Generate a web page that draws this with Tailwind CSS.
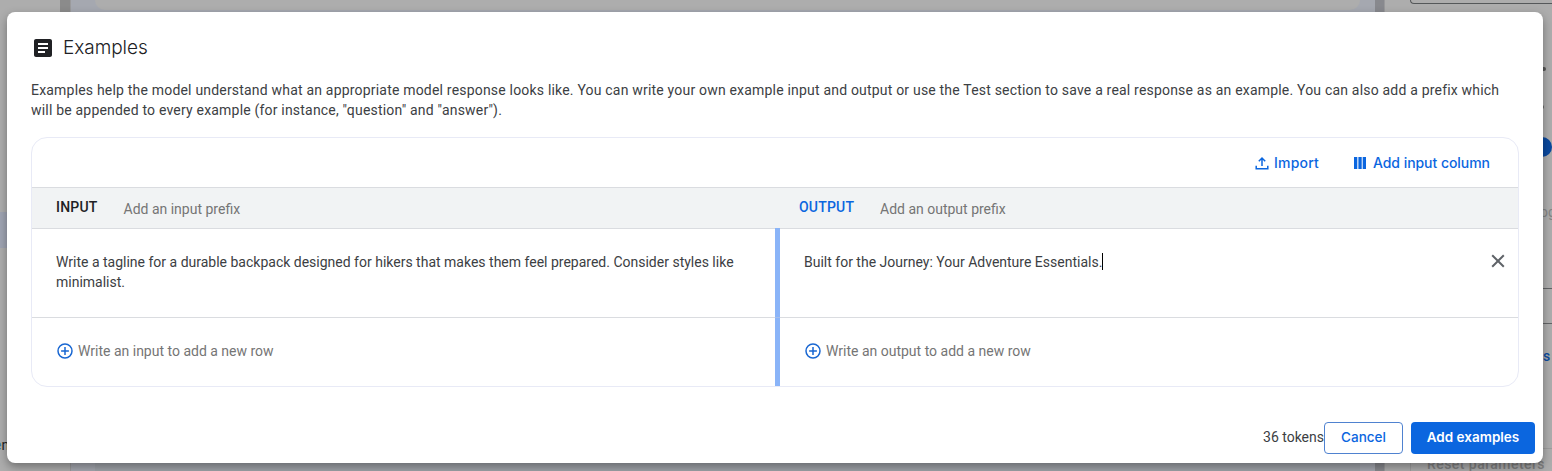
<!DOCTYPE html>
<html lang="en">
<head>
<meta charset="utf-8">
<title>Examples</title>
<script src="https://cdn.jsdelivr.net/npm/@tailwindcss/browser@4"></script>
</head>
<body class="relative h-[471px] w-[1552px] overflow-hidden bg-[#adadad] font-[Roboto,sans-serif] text-sm text-[#3c4043]">
  <!-- Dimmed page behind the dialog -->
  <div class="flex h-full" aria-hidden="true">
    <div class="flex w-[60px] flex-col justify-start bg-[#adadad] pt-[212px]">
      <div class="h-9 bg-[#9fa4b2]"></div>
      <div class="mt-[187px] h-5 w-[9px] whitespace-nowrap text-[#222]"><span class="-ml-[6px] text-[#39779c]">e</span>n</div>
    </div>
    <div class="flex w-[11px] flex-col border-r border-[#9a9a9c] bg-[#8b8b8b]"><div class="mt-auto h-[30px] bg-[#adadad]"></div></div>
    <div class="flex w-[1304px] flex-col justify-between bg-[#a5a8b0] pr-[15px] pl-[24px]">
      <div class="h-[10px] rounded-b-[20px] bg-[#adadad]"></div>
      <div class="h-5 bg-[#9fa3a9]"></div>
    </div>
    <div class="w-[10px] border-r border-[#99999b] bg-[#88898e]"></div>
    <div class="flex flex-1 flex-col overflow-hidden pl-[25px]">
      <div class="h-1 shrink-0 rounded-bl border-b border-l border-[#55585a]"></div>
      <div class="mt-[63px] ml-[131px] h-1 w-[5px] shrink-0 rounded-full bg-[#555]"></div>
      <div class="mt-[34px] ml-[130px] h-1 w-1 shrink-0 rounded-full bg-[#666]"></div>
      <div class="mt-7 ml-[122px] size-5 shrink-0 rounded-full bg-[#0a489e]"></div>
      <div class="mt-[45px] ml-[130px] h-5 shrink-0 leading-5 whitespace-nowrap text-[#858585]">og</div>
      <div class="mt-[66px] h-9 shrink-0 border-y border-[#626466]"></div>
      <div class="mt-[22px] ml-[133px] h-5 shrink-0 font-medium text-[#0c4b9f]">s</div>
      <div class="mt-[82px] h-[30px] shrink-0 border-t border-l border-[#9d9d9d] pt-[5px] pl-4 leading-5 font-medium tracking-[.45px] whitespace-nowrap text-[#808080]">Reset parameters</div>
    </div>
  </div>

  <!-- Dialog -->
  <section class="absolute top-3 left-[7px] flex h-[451px] w-[1536px] flex-col rounded-lg bg-white shadow-[0_4px_10px_rgba(0,0,0,.35)]" role="dialog">
    <h1 class="flex h-[68px] items-center gap-2 pt-1 pl-6 font-[Inter,sans-serif] text-[19px] font-light tracking-[-.05px] text-[#202124]">
      <svg class="size-6" viewBox="0 0 24 24" fill="#202124"><path d="M19 3H5c-1.100 0-2 .9-2 2v14c0 1.100.9 2 2 2h14c1.100 0 2-.9 2-2V5c0-1.100-.9-2-2-2zm-5 14H7v-2h7v2zm3-4H7v-2h10v2zm0-4H7V7h10v2z"/></svg>
      <span>Examples</span>
    </h1>
    <p class="px-6 leading-5 tracking-[.195px]">Examples help the model understand what an appropriate model response looks like. You can write your own example input and output or use the Test section to save a real response as an example. You can also add a prefix which<br>will be appended to every example (for instance, "question" and "answer").</p>

    <div class="mx-6 mt-[17px] flex h-[250px] flex-col overflow-hidden rounded-2xl border border-[#e8eaf6]">
      <div class="flex h-[49px] items-center justify-end gap-[34px] pr-7 font-[Inter,sans-serif] text-sm font-medium text-[#0b66df]">
        <button class="flex items-center gap-1">
          <svg class="size-4" viewBox="0 0 16 16" fill="none" stroke="#0b66df" stroke-width="1.500"><path d="M8 11V3.200M4.800 6.200 8 3l3.200 3.200M2.200 10.800v2.900h11.600v-2.900"/></svg><span class="w-[46px] text-left tracking-[.2px]">Import</span>
        </button>
        <button class="flex items-center gap-[7px]">
          <svg class="h-3 w-3" viewBox="0 0 12 12" fill="#0b66df"><path d="M0 0h3.300v12H0zM4.400 0h3.300v12H4.400zM8.700 0H12v12H8.700z"/></svg><span class="w-[117px] text-left tracking-[-.05px] whitespace-nowrap">Add input column</span>
        </button>
      </div>
      <div class="flex h-[42px] shrink-0 border-y border-[#dadce0] bg-[#f1f3f4]">
        <div class="flex w-[743px] pl-6 leading-5"><span class="w-[67.500px] pt-[9px] font-medium tracking-[.2px] text-[#202124]">INPUT</span><span class="pt-[11px] text-[#757575]">Add an input prefix</span></div>
        <div class="flex flex-1 pl-6 leading-5"><span class="w-[81px] pt-[9px] font-medium tracking-[.2px] text-[#0b66df]">OUTPUT</span><span class="pt-[11px] text-[#757575]">Add an output prefix</span></div>
      </div>
      <div class="-mt-px flex h-[90px] shrink-0">
        <div class="w-[743px] border-b border-[#dadce0] pt-6 pl-6 leading-5">Write a tagline for a durable backpack designed for hikers that makes them feel prepared. Consider styles like<br>minimalist.</div>
        <div class="w-[5px] border-b border-[#a5bfed] bg-[#8ab4f8]"></div>
        <div class="flex flex-1 items-start border-b border-[#dadce0] pt-6 pl-6 leading-5">
          <span>Built for the Journey: Your Adventure Essentials.</span><span class="mt-px h-[17px] w-px bg-black"></span>
          <svg class="mt-[2px] mr-[13px] ml-auto size-3.5" viewBox="0 0 14 14" stroke="#5f6368" stroke-width="2"><path d="M1.200 1.200l11.600 11.600M12.800 1.200L1.200 12.800"/></svg>
        </div>
      </div>
      <div class="flex flex-1 text-[#757575]">
        <div class="flex w-[743px] items-center gap-1 pb-0.5 pl-[25px]"><svg class="size-[17px]" viewBox="0 0 17 17" fill="none" stroke="#1967d2" stroke-width="1.500"><circle cx="8" cy="8" r="7"/><path d="M8 4.100v7.800M4.100 8h7.800"/></svg>Write an input to add a new row</div>
        <div class="w-[5px] bg-[#8ab4f8]"></div>
        <div class="flex flex-1 items-center gap-1 pb-0.5 pl-[25px]"><svg class="size-[17px]" viewBox="0 0 17 17" fill="none" stroke="#1967d2" stroke-width="1.500"><circle cx="8" cy="8" r="7"/><path d="M8 4.100v7.800M4.100 8h7.800"/></svg>Write an output to add a new row</div>
      </div>
    </div>

    <div class="mt-[35px] flex h-8 items-center justify-end pr-2">
      <span class="pb-0.5">36 tokens</span>
      <button class="h-8 w-[79px] rounded border border-[#4f82d0] font-[Inter,sans-serif] text-[13.500px] font-medium text-[#0b66df]">Cancel</button>
      <button class="ml-2 h-8 w-[124px] rounded bg-[#0b66df] font-[Inter,sans-serif] text-[13.500px] font-semibold text-white">Add examples</button>
    </div>
  </section>
</body>
</html>
